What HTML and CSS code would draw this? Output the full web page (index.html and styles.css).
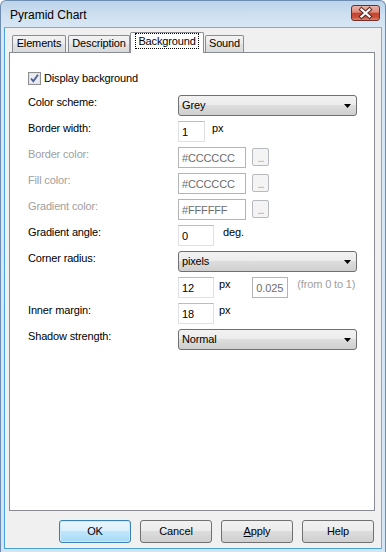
FILE: index.html
```html
<!DOCTYPE html>
<html>
<head>
<meta charset="utf-8">
<link rel="stylesheet" href="styles.css">
</head>
<body>
<div class="window">
  <div class="titlebar">
    <span class="title">Pyramid Chart</span>
    <div class="close">
      <svg width="29" height="16" viewBox="0 0 29 16">
        <path d="M10.5 4.5 L18.5 11.5 M18.5 4.5 L10.5 11.5" stroke="#5a2a25" stroke-width="4.2" stroke-linecap="square" fill="none"/>
        <path d="M10.5 4.5 L18.5 11.5 M18.5 4.5 L10.5 11.5" stroke="#ffffff" stroke-width="2.2" stroke-linecap="square" fill="none"/>
      </svg>
    </div>
  </div>
  <div class="client">
    <div class="tabs">
      <div class="tab tab-elements">Elements</div>
      <div class="tab tab-description">Description</div>
      <div class="tab tab-background active"><span class="focus">Background</span></div>
      <div class="tab tab-sound">Sound</div>
    </div>
    <div class="panel">
      <div class="check">
        <span class="box">
          <svg width="13" height="13" viewBox="0 0 13 13">
            <rect x="0.5" y="0.5" width="12" height="12" fill="#f4f4f4" stroke="#8f8f8f"/>
            <rect x="1.5" y="1.5" width="10" height="10" fill="#e9ecf2" stroke="#dfe2e8"/>
            <path d="M3 6.5 L5.3 9.2 L10 2.8" stroke="#4a5f93" stroke-width="1.8" fill="none"/>
          </svg>
        </span>
        <span class="check-label">Display background</span>
      </div>
      <div class="form">
        <span class="label">Color scheme:</span>
        <div class="ctrl"><div class="select"><span>Grey</span><svg class="arrow" width="7" height="4" viewBox="0 0 7 4"><path d="M0 0 H7 L3.5 4 Z" fill="#000"/></svg></div></div>

        <span class="label">Border width:</span>
        <div class="ctrl"><div class="input w27">1</div><span class="unit u7">px</span></div>

        <span class="label disabled">Border color:</span>
        <div class="ctrl"><div class="input w68 dis">#CCCCCC</div><div class="dots">...</div></div>

        <span class="label disabled">Fill color:</span>
        <div class="ctrl"><div class="input w68 dis">#CCCCCC</div><div class="dots">...</div></div>

        <span class="label disabled">Gradient color:</span>
        <div class="ctrl"><div class="input w68 dis">#FFFFFF</div><div class="dots">...</div></div>

        <span class="label">Gradient angle:</span>
        <div class="ctrl"><div class="input w36">0</div><span class="unit u9">deg.</span></div>

        <span class="label">Corner radius:</span>
        <div class="ctrl"><div class="select"><span>pixels</span><svg class="arrow" width="7" height="4" viewBox="0 0 7 4"><path d="M0 0 H7 L3.5 4 Z" fill="#000"/></svg></div></div>

        <span class="label"></span>
        <div class="ctrl"><div class="input w36">12</div><span class="unit u5">px</span><div class="input w36 dis ratio">0.025</div><span class="unit u9 disabled">(from 0 to 1)</span></div>

        <span class="label">Inner margin:</span>
        <div class="ctrl"><div class="input w36">18</div><span class="unit u5">px</span></div>

        <span class="label">Shadow strength:</span>
        <div class="ctrl"><div class="select"><span>Normal</span><svg class="arrow" width="7" height="4" viewBox="0 0 7 4"><path d="M0 0 H7 L3.5 4 Z" fill="#000"/></svg></div></div>
      </div>
    </div>
    <div class="buttons">
      <div class="btn default">OK</div>
      <div class="btn">Cancel</div>
      <div class="btn"><u>A</u>pply</div>
      <div class="btn">Help</div>
    </div>
  </div>
</div>
</body>
</html>
```

FILE: styles.css
```css
* { box-sizing: border-box; }
html, body { margin: 0; padding: 0; }
body {
  width: 386px;
  height: 552px;
  background: #ffffff;
  font-family: "Liberation Sans", Arial, sans-serif;
  font-size: 11px;
  line-height: 13px;
  letter-spacing: -0.15px;
  color: #000;
  overflow: hidden;
}
.window {
  width: 386px;
  height: 552px;
  display: flex;
  flex-direction: column;
  border: 1px solid #6d8cb0;
  border-bottom: none;
  border-radius: 6px 6px 0 0;
  background: linear-gradient(#bcd3ea, #cfe0f1 14px, #d9e7f4 27px, #d4e4f3);
  padding: 0 3px 3px 3px;
}
.titlebar {
  height: 26px;
  display: flex;
  justify-content: space-between;
  align-items: flex-start;
  padding: 0 2px 0 6px;
}
.title {
  font-size: 12px;
  line-height: 14px;
  letter-spacing: 0;
  margin-top: 7px;
  color: #000;
}
.close {
  width: 29px;
  height: 16px;
  margin-top: 4px;
  border: 1px solid #6c2f2b;
  border-radius: 3px;
  background: linear-gradient(#eab3a8, #de8a7b 45%, #c7432f 50%, #c84f38 80%, #e08a6a);
  display: flex;
  align-items: center;
  justify-content: center;
  overflow: hidden;
}
.close svg { display: block; margin: -1px; }
.client {
  flex: 1;
  background: #f0f0f0;
  border: 1px solid #8aa7c8;
  border-left-color: #4aa3dc;
  border-bottom-color: #4aa3dc;
  display: flex;
  flex-direction: column;
  padding: 4px 6px 5px 4px;
}
.tabs {
  display: flex;
  height: 20px;
  padding-left: 3px;
  align-items: flex-end;
  position: relative;
  z-index: 1;
}
.tab {
  height: 17px;
  border: 1px solid #898c95;
  border-bottom: none;
  border-radius: 2px 2px 0 0;
  background: linear-gradient(#f3f3f3, #ebebeb 50%, #e2e2e2 50%, #dadada);
  text-align: center;
  line-height: 15px;
  margin-right: 2px;
  white-space: nowrap;
}
.tab-elements { width: 54px; }
.tab-description { width: 62px; }
.tab-background { width: 74px; }
.tab-sound { width: 39px; }
.tab.active {
  height: 21px;
  background: #ffffff;
  margin: 0 1px -1px -2px;
  padding-top: 1px;
  line-height: 14px;
}
.focus {
  display: inline-block;
  outline: 1px dotted #000;
  outline-offset: 0;
  padding: 0 2px;
  line-height: 14px;
}
.panel {
  flex: 1;
  background: #ffffff;
  border: 1px solid #898c95;
  padding: 18px 18px 0 18px;
}
.check {
  display: flex;
  align-items: center;
  height: 14px;
  margin-bottom: 10px;
}
.box { display: block; width: 13px; height: 13px; margin-right: 3px; }
.box svg { display: block; }
.form {
  display: grid;
  grid-template-columns: 150px 1fr;
  grid-auto-rows: 21px;
  row-gap: 5px;
}
.label { padding-top: 1px; white-space: nowrap; }
.disabled { color: #a0a0a0; }
.ctrl { display: flex; align-items: flex-start; white-space: nowrap; }
.select {
  width: 179px;
  height: 21px;
  border: 1px solid #707070;
  border-radius: 3px;
  background: linear-gradient(#f2f2f2, #ebebeb 50%, #dddddd 50%, #cfcfcf);
  display: flex;
  align-items: center;
  justify-content: space-between;
  padding: 0 5px 0 3px;
}
.arrow { display: block; }
.input {
  height: 21px;
  background: #fff;
  border: 1px solid #dde0e5;
  border-top-color: #b9bcc2;
  padding: 3px 2px 0 3px;
  line-height: 14px;
}
.input.dis {
  border: 1px solid #b4b4b4;
  color: #6d6d6d;
}
.w27 { width: 27px; }
.w36 { width: 36px; }
.w68 { width: 68px; }
.unit { padding-top: 1px; }
.u5 { margin-left: 5px; }
.u7 { margin-left: 7px; }
.u9 { margin-left: 9px; }
.ratio { margin-left: 22px; }
.dots {
  width: 17px;
  height: 18px;
  margin-left: 6px;
  margin-top: 1px;
  border: 1px solid #b6b9bd;
  border-radius: 2px;
  background: #f4f4f4;
  color: #a0a0a0;
  text-align: center;
  line-height: 19px;
  font-size: 11px;
  letter-spacing: -1px;
}
.buttons {
  display: flex;
  justify-content: flex-end;
  gap: 9px;
  padding-right: 1px;
  margin-top: 9px;
}
.btn {
  width: 72px;
  height: 23px;
  border: 1px solid #707070;
  border-radius: 3px;
  background: linear-gradient(#f2f2f2, #ebebeb 50%, #dddddd 50%, #cfcfcf);
  text-align: center;
  line-height: 21px;
}
.btn.default {
  border-color: #3c7fb1;
  background: linear-gradient(#eaf6fd, #d9f0fc 50%, #bee6fd 50%, #a7d9f5);
  box-shadow: inset 0 0 0 1px #cbe9fa;
}
.btn u { text-decoration: underline; }
```
